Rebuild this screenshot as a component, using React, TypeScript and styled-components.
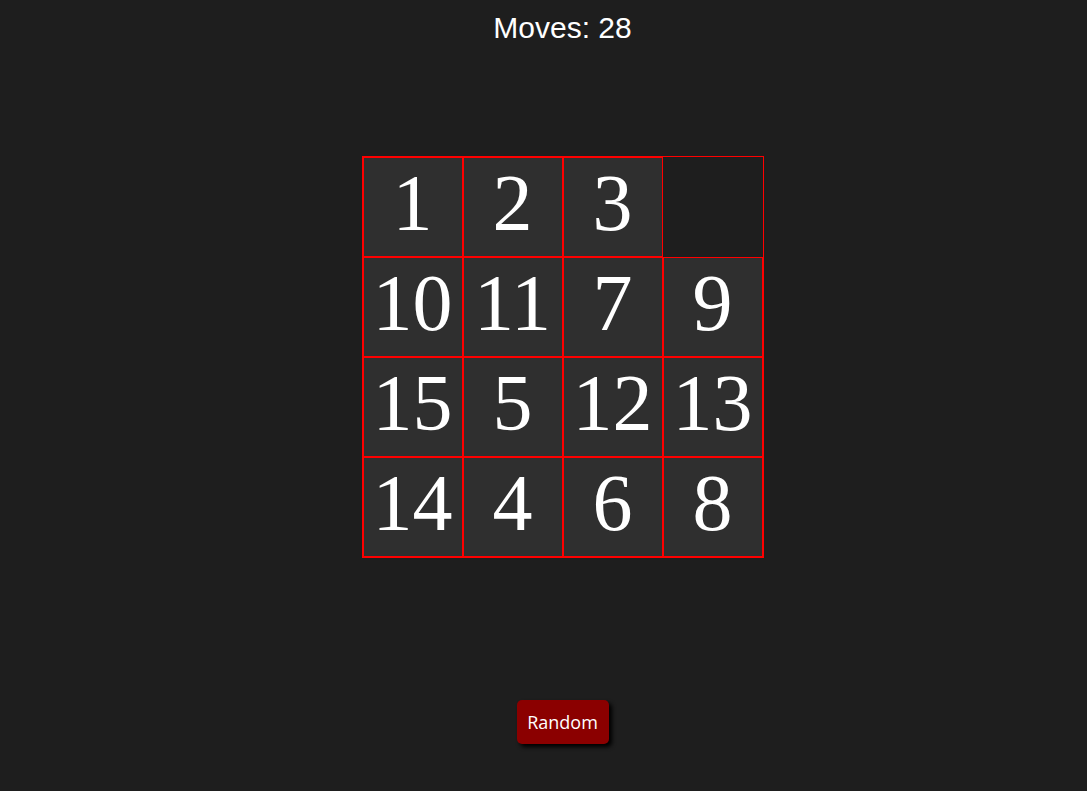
import React, { useState } from 'react';
import styled, { createGlobalStyle } from 'styled-components';

const GlobalStyle = createGlobalStyle`
  html, body {
    margin: 0;
    padding: 0;
    background: #1e1e1e;
  }
  body {
    min-height: 791px;
  }
`;

const Page = styled.div`
  display: flex;
  flex-direction: column;
  align-items: center;
  padding-left: 38px;
  min-height: 791px;
  box-sizing: border-box;
`;

const Counter = styled.div`
  margin-top: 10px;
  font-family: 'Liberation Sans', Arial, sans-serif;
  font-size: 30px;
  color: #ffffff;
  line-height: 35px;
`;

const Board = styled.div`
  margin-top: 111px;
  display: grid;
  grid-template-columns: repeat(4, 100px);
  grid-template-rows: repeat(4, 100px);
  border: 1px solid #ff0000;
`;

const Tile = styled.div<{ $empty?: boolean }>`
  box-sizing: border-box;
  display: flex;
  align-items: center;
  justify-content: center;
  background: ${p => (p.$empty ? '#1e1e1e' : '#2f2f2f')};
  border: ${p => (p.$empty ? 'none' : '1px solid #ff0000')};
  font-family: 'Liberation Serif', 'Times New Roman', serif;
  font-size: 80px;
  color: #ffffff;
  line-height: 1;
  padding-bottom: 8px;
  user-select: none;
`;

const RandomButton = styled.button`
  margin-top: 142px;
  width: 92px;
  height: 44px;
  background: #8b0000;
  color: #ffffff;
  border: none;
  border-radius: 5px;
  box-shadow: 3px 3px 4px #000000;
  font-family: 'Open Sans', 'Noto Sans', sans-serif;
  font-size: 18px;
  cursor: pointer;
`;

const START = [1, 2, 3, 0, 10, 11, 7, 9, 15, 5, 12, 13, 14, 4, 6, 8];

const App = () => {
  const [tiles, setTiles] = useState<number[]>(START);
  const [moves, setMoves] = useState(28);

  const move = (i: number) => {
    const e = tiles.indexOf(0);
    const r = Math.floor(i / 4), c = i % 4;
    const er = Math.floor(e / 4), ec = e % 4;
    if (Math.abs(r - er) + Math.abs(c - ec) !== 1) return;
    const next = [...tiles];
    next[e] = next[i];
    next[i] = 0;
    setTiles(next);
    setMoves(moves + 1);
  };

  const shuffle = () => {
    const next = [...tiles].sort(() => Math.random() - 0.5);
    setTiles(next);
    setMoves(0);
  };

  return (
    <>
      <GlobalStyle />
      <Page>
        <Counter>Moves: {moves}</Counter>
        <Board>
          {tiles.map((n, i) => (
            <Tile key={i} $empty={n === 0} onClick={() => move(i)}>
              {n === 0 ? '' : n}
            </Tile>
          ))}
        </Board>
        <RandomButton onClick={shuffle}>Random</RandomButton>
      </Page>
    </>
  );
};

export default App;
